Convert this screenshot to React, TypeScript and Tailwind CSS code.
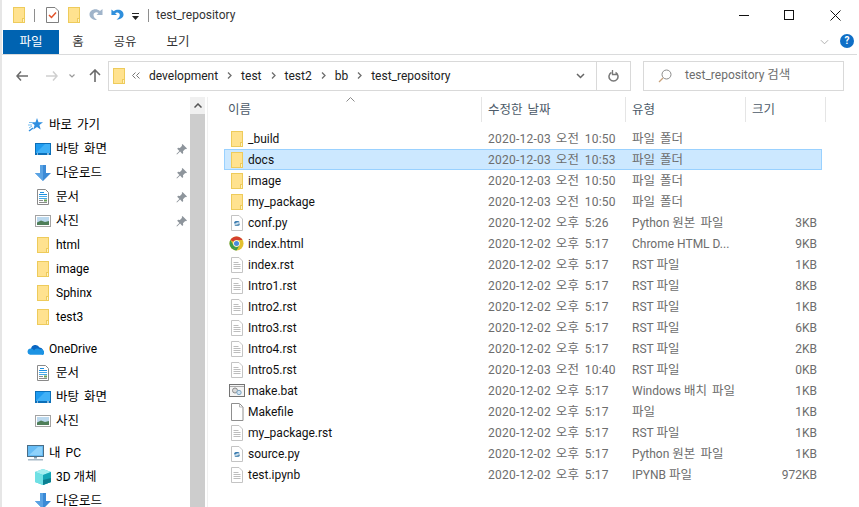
import React from 'react';

const fontStack = 'Roboto, "Noto Sans CJK KR", sans-serif';

// 한글만 살짝 키워서 맑은 고딕 폭에 맞춘다
const T = ({ children }: { children: string }) => (
  <>
    {children.split(/([\uAC00-\uD7A3][\uAC00-\uD7A3 ]*)/).map((part, i) =>
      i % 2 ? (
        <span key={i} className="text-[12.5px] [word-spacing:2px]">
          {part}
        </span>
      ) : (
        part
      ),
    )}
  </>
);

// 탐색기 아이콘들
const FolderIcon = ({ className = '' }: { className?: string }) => (
  <svg width="14" height="16" viewBox="0 0 14 16" className={className}>
    <rect x="1.5" y="0.5" width="11" height="15" fill="#ffe28f" stroke="#eecb5b" />
    <rect x="10.5" y="11.5" width="2" height="4" fill="#fff3c4" stroke="#eecb5b" />
  </svg>
);

const TextFileIcon = () => (
  <svg width="14" height="16" viewBox="0 0 14 16">
    <path d="M1.5.5h7.500l3.500 3.500v11.500h-11z" fill="#fff" stroke="#c4c4c4" />
    <path d="M3.500 5.500h5M3.500 7.500h7M3.500 9.500h7M3.500 11.500h7" stroke="#bdbdbd" />
  </svg>
);

const BlankFileIcon = () => (
  <svg width="14" height="18" viewBox="0 0 14 18">
    <path d="M1.500.5h8l3.500 3.500v13.500h-11.500z" fill="#fff" stroke="#8f8f8f" />
    <path d="M9.500.5v3.500h3.500" fill="none" stroke="#b5b5b5" />
  </svg>
);

const PythonFileIcon = () => (
  <svg width="14" height="16" viewBox="0 0 14 16">
    <path d="M1.500.5h7.500l3.500 3.500v11.500h-11z" fill="#fff" stroke="#c4c4c4" />
    <path d="M4 8.500c0-2 1-2.500 3-2.500s2.500 .5 2.500 1.500H6.500v1z" fill="#3b7cb0" />
    <path d="M10 8.500c0 2-1 2.500-3 2.500s-2.500-.5-2.500-1.500h3v-1z" fill="#5f93b8" />
  </svg>
);

const ChromeIcon = () => (
  <svg width="15" height="15" viewBox="0 0 16 16">
    <circle cx="8" cy="8" r="7.500" fill="#e2c02e" />
    <path d="M8 .5a7.500 7.500 0 0 1 6.500 3.750H8a3.750 3.750 0 0 0-3.250 1.880L1.500 4.250A7.500 7.500 0 0 1 8 .5z" fill="#d5402f" />
    <path d="M1.500 4.250l3.250 5.630A3.750 3.750 0 0 0 8 11.750L4.750 14.500A7.500 7.500 0 0 1 1.500 4.250z" fill="#3c9b4b" />
    <path d="M4.750 14.500 8 11.750a3.750 3.750 0 0 0 3.250-1.880l-3.250 5.630a7.500 7.500 0 0 1-3.250-1z" fill="#3c9b4b" />
    <circle cx="8" cy="8" r="3.500" fill="#fff" />
    <circle cx="8" cy="8" r="2.700" fill="#4a8bdb" />
  </svg>
);

const BatIcon = () => (
  <svg width="16" height="13" viewBox="0 0 16 13">
    <rect x="0.500" y="0.500" width="15" height="12" fill="#f4f4f4" stroke="#737373" />
    <path d="M1 2.500h14" stroke="#a8a8a8" />
    <circle cx="6" cy="6.500" r="2.500" fill="#d9d9d9" stroke="#8c8c8c" />
    <circle cx="10" cy="8.500" r="2.200" fill="#cfe2f1" stroke="#7ea6c4" />
  </svg>
);

const PinIcon = () => (
  <svg width="11" height="11" viewBox="0 0 11 11">
    <path d="M6.500 0 11 4.500l-1 .8-.8-.3-2.200 2.200.2 1.800-.9.900-2.200-2.300L1 10.500l-.6-.5 3-3.100L1.200 4.700l.9-.9 1.800.2L6.100 1.800 5.700 1z" fill="#8e959c" />
  </svg>
);

const StarIcon = () => (
  <svg width="15" height="14" viewBox="0 0 15 14">
    <path d="M9 0l1.500 4.300H15l-3.600 2.800 1.300 4.400L9 8.900l-3.700 2.600 1.300-4.400L3 4.300h4.500z" fill="#2f8fe0" />
    <path d="M1 4.500h4M0 7h4M1 10l3-2" stroke="#74bdf0" />
    <path d="M1 13l4-3" stroke="#2f8fe0" strokeWidth="1.500" />
  </svg>
);

const DesktopIcon = () => (
  <svg width="16" height="12" viewBox="0 0 16 12">
    <rect width="16" height="12" fill="#0c6fb8" />
    <rect x="1" y="1" width="14" height="9" fill="#1e9bf0" />
    <path d="M1 10l9-9h5v9z" fill="#3fb0f7" />
    <path d="M2 11h1M12 11h2" stroke="#fff" />
  </svg>
);

const DownloadIcon = () => (
  <svg width="16" height="16" viewBox="0 0 16 16">
    <path d="M5 0h6v8h5l-8 8-8-8h5z" fill="#3b8ad6" />
    <path d="M5 0h3v16l-8-8h5z" fill="#5aa3e4" />
  </svg>
);

const DocIcon = () => (
  <svg width="12" height="16" viewBox="0 0 12 16">
    <path d="M.5.5h8l3 3v12h-11z" fill="#fff" stroke="#8a8a8a" />
    <path d="M3 3.500h4M2 5.500h8" stroke="#1e90e0" />
    <path d="M2 7.500h8M2 9.500h8" stroke="#46a9e8" />
    <path d="M2 11.500h4M2 13.500h8" stroke="#8b8b8b" />
    <rect x="7" y="10.500" width="3" height="2" fill="#6aa05a" />
  </svg>
);

const PictureIcon = () => (
  <svg width="16" height="12" viewBox="0 0 16 12">
    <rect x="0.500" y="0.500" width="15" height="11" fill="#fff" stroke="#a3a3a3" />
    <rect x="2" y="2" width="12" height="8" fill="#bcd9ee" />
    <path d="M2 7.500l4-2 4 1.500 4-1v4H2z" fill="#4f7f5a" />
  </svg>
);

const OneDriveIcon = () => (
  <svg width="17" height="11" viewBox="0 0 17 11">
    <path d="M4 5a4.500 4.500 0 0 1 8.500-1.500A3.500 3.500 0 0 1 16 6L9 8 4 6z" fill="#0a66c2" />
    <path d="M4 4.500a3.200 3.200 0 0 0-1 6.300h11.500A2.400 2.400 0 0 0 16.500 6.500 2.500 2.500 0 0 0 13 5.500 4 4 0 0 0 7 6.500 3 3 0 0 0 4 4.500z" fill="#1c93e3" />
  </svg>
);

const PcIcon = () => (
  <svg width="17" height="16" viewBox="0 0 17 16">
    <rect x="0.500" y="0.500" width="16" height="11" fill="#66bcf5" stroke="#4b6d85" />
    <path d="M2 10L11 2h4v8z" fill="#8ed2fb" />
    <rect x="7" y="12" width="3" height="1.500" fill="#7f9db1" />
    <rect x="1" y="14" width="15" height="1.500" fill="#a7bac7" />
  </svg>
);

const CubeIcon = () => (
  <svg width="16" height="16" viewBox="0 0 16 16">
    <path d="M8 0l8 3v10l-8 3-8-3V3z" fill="#3fd0d8" />
    <path d="M8 0l8 3-8 3-8-3z" fill="#a5eef0" />
    <path d="M8 6v10l8-3V3z" fill="#14a5b5" />
    <path d="M8 11v5l8-3v-4z" fill="#0c7f91" />
    <path d="M0 3l8 3v10L0 13z" fill="#6fe0e4" />
  </svg>
);

const Chevron = () => (
  <svg width="23" height="9" viewBox="0 0 23 9" className="shrink-0">
    <path d="M10 1.500 13 4.500l-3 3" fill="none" stroke="#6e6e6e" strokeWidth="1.300" />
  </svg>
);

type FileRow = { name: string; date: string; type: string; size?: string; icon: React.ReactNode; selected?: boolean };

const fileRows: FileRow[] = [
  { name: '_build', date: '2020-12-03 오전 10:50', type: '파일 폴더', icon: <FolderIcon /> },
  { name: 'docs', date: '2020-12-03 오전 10:53', type: '파일 폴더', icon: <FolderIcon />, selected: true },
  { name: 'image', date: '2020-12-03 오전 10:50', type: '파일 폴더', icon: <FolderIcon /> },
  { name: 'my_package', date: '2020-12-03 오전 10:50', type: '파일 폴더', icon: <FolderIcon /> },
  { name: 'conf.py', date: '2020-12-02 오후 5:26', type: 'Python 원본 파일', size: '3KB', icon: <PythonFileIcon /> },
  { name: 'index.html', date: '2020-12-02 오후 5:17', type: 'Chrome HTML D...', size: '9KB', icon: <ChromeIcon /> },
  { name: 'index.rst', date: '2020-12-02 오후 5:17', type: 'RST 파일', size: '1KB', icon: <TextFileIcon /> },
  { name: 'Intro1.rst', date: '2020-12-02 오후 5:17', type: 'RST 파일', size: '8KB', icon: <TextFileIcon /> },
  { name: 'Intro2.rst', date: '2020-12-02 오후 5:17', type: 'RST 파일', size: '1KB', icon: <TextFileIcon /> },
  { name: 'Intro3.rst', date: '2020-12-02 오후 5:17', type: 'RST 파일', size: '6KB', icon: <TextFileIcon /> },
  { name: 'Intro4.rst', date: '2020-12-02 오후 5:17', type: 'RST 파일', size: '2KB', icon: <TextFileIcon /> },
  { name: 'Intro5.rst', date: '2020-12-03 오전 10:40', type: 'RST 파일', size: '0KB', icon: <TextFileIcon /> },
  { name: 'make.bat', date: '2020-12-02 오후 5:17', type: 'Windows 배치 파일', size: '1KB', icon: <BatIcon /> },
  { name: 'Makefile', date: '2020-12-02 오후 5:17', type: '파일', size: '1KB', icon: <BlankFileIcon /> },
  { name: 'my_package.rst', date: '2020-12-02 오후 5:17', type: 'RST 파일', size: '1KB', icon: <TextFileIcon /> },
  { name: 'source.py', date: '2020-12-02 오후 5:17', type: 'Python 원본 파일', size: '1KB', icon: <PythonFileIcon /> },
  { name: 'test.ipynb', date: '2020-12-02 오후 5:17', type: 'IPYNB 파일', size: '972KB', icon: <TextFileIcon /> },
];

const NavItem = ({ icon, label, pinned, top }: { icon: React.ReactNode; label: string; pinned?: boolean; top?: boolean }) => (
  <div className={`flex h-6 items-center text-[12px] text-black ${top ? 'pl-[25px]' : 'pl-[33px]'}`}>
    <span className={`flex h-4 shrink-0 items-center justify-center ${top ? 'w-[17px]' : 'w-4'}`}>{icon}</span>
    <span className="flex-1 pl-[5px]">
      <T>{label}</T>
    </span>
    {pinned && (
      <span className="flex w-[14px] shrink-0 items-center">
        <PinIcon />
      </span>
    )}
  </div>
);

export default function App() {
  return (
    <div
      className="flex h-[507px] w-[859px] flex-col overflow-hidden border-l-2 border-[#e6e6e6] bg-white"
      style={{ fontFamily: fontStack }}
    >
      {/* 제목 표시줄 */}
      <div className="flex h-[30px] shrink-0 items-center">
        <FolderIcon className="ml-[10px]" />
        <span className="ml-[8px] h-[13px] w-px bg-[#8e8e8e]" />
        <svg width="13" height="16" viewBox="0 0 13 16" className="ml-[11px]">
          <path d="M.5.5h8.500l3.500 3.500v11.500h-12z" fill="#fff" stroke="#7f7f7f" />
          <path d="M3 8l2.500 2.500L10 5.500" fill="none" stroke="#e2532a" strokeWidth="1.500" />
        </svg>
        <FolderIcon className="ml-[8px]" />
        <svg width="15" height="14" viewBox="0 0 15 14" className="ml-[8px]">
          <path d="M13.500 1v6h-6l2-2c-2-1.500-5-.5-5 2 0 2 1.500 3.500 3.500 5-4 0-7.500-2-7.500-5.500C.5 2 6.500-.5 11 3z" fill="#a0b4ca" />
        </svg>
        <svg width="14" height="14" viewBox="0 0 15 14" className="ml-[6px]">
          <path d="M1.500 1v6h6l-2-2c2-1.500 5-.5 5 2 0 2-1.500 3.500-3.500 5 4 0 7.500-2 7.500-5.500C14.500 2 8.500-.5 4 3z" fill="#2f8fdc" />
        </svg>
        <svg width="7" height="7" viewBox="0 0 7 7" className="ml-[8px] mt-[3px]">
          <path d="M0 0h7v1H0zM0 3h7L3.500 7z" fill="#222" />
        </svg>
        <span className="ml-[9px] h-[13px] w-px bg-[#8e8e8e]" />
        <span className="ml-[7px] text-[12px] text-[#333]">test_repository</span>
        <svg width="10" height="1" viewBox="0 0 10 1" className="ml-auto">
          <rect width="10" height="1" fill="#111" />
        </svg>
        <svg width="10" height="10" viewBox="0 0 10 10" className="ml-[35px]">
          <rect x="0.500" y="0.500" width="9" height="9" fill="none" stroke="#111" />
        </svg>
        <svg width="11" height="11" viewBox="0 0 11 11" className="ml-[36px] mr-[18px]">
          <path d="M.5.5l10 10M10.500.5l-10 10" stroke="#111" />
        </svg>
      </div>

      {/* 리본 탭 */}
      <div className="mr-[2px] flex h-[25px] shrink-0 items-start border-b border-[#dadbdc] pl-px text-[12px] text-[#333]">
        <span className="flex h-[24px] w-14 items-center justify-center bg-[#0063b1] text-white">
          <T>파일</T>
        </span>
        <span className="flex h-[24px] w-[38px] items-center justify-center">
          <T>홈</T>
        </span>
        <span className="flex h-[24px] w-[56px] items-center justify-center">
          <T>공유</T>
        </span>
        <span className="flex h-[24px] w-[50px] items-center justify-center">
          <T>보기</T>
        </span>
        <svg width="9" height="6" viewBox="0 0 10 6" className="ml-auto mt-[9px]">
          <path d="M1 1l4 4 4-4" fill="none" stroke="#a8a8a8" />
        </svg>
        <span className="ml-[11px] mr-[3px] mt-[4px] flex h-[14px] w-[14px] items-center justify-center rounded-full bg-[#0f6fc6] text-[10px] font-bold leading-none text-white">
          ?
        </span>
      </div>

      {/* 주소 표시줄 */}
      <div className="flex h-[42px] shrink-0 items-center pb-px">
        <svg width="12" height="10" viewBox="0 0 12 10" className="ml-[14px]">
          <path d="M5 .5L1 5l4 4.500M1 5h11" fill="none" stroke="#6b6b6b" strokeWidth="1.500" />
        </svg>
        <svg width="12" height="10" viewBox="0 0 12 10" className="ml-[18px]">
          <path d="M7 .5L11 5l-4 4.500M11 5H0" fill="none" stroke="#cfcfcf" strokeWidth="1.500" />
        </svg>
        <svg width="6" height="4" viewBox="0 0 6 4" className="ml-[11px]">
          <path d="M.5.5L3 3 5.500.5" fill="none" stroke="#9a9a9a" strokeWidth="1.200" />
        </svg>
        <svg width="12" height="13" viewBox="0 0 12 13" className="ml-[14px]">
          <path d="M6 1v12M1 6l5-5 5 5" fill="none" stroke="#6b6b6b" strokeWidth="1.600" />
        </svg>
        <div className="ml-[7px] flex h-[30px] w-[523px] items-center border border-[#d9d9d9] text-[12px] text-[#222]">
          <FolderIcon className="ml-[3px]" />
          <svg width="8" height="7" viewBox="0 0 8 7" className="ml-[6px]">
            <path d="M3.500.5L.5 3.500l3 3M7.500.5l-3 3 3 3" fill="none" stroke="#777" />
          </svg>
          <span className="ml-[9px]">development</span>
          <Chevron />
          <span>test</span>
          <Chevron />
          <span>test2</span>
          <Chevron />
          <span>bb</span>
          <Chevron />
          <span>test_repository</span>
          <svg width="9" height="6" viewBox="0 0 9 6" className="ml-auto">
            <path d="M1 1l3.500 3.500L8 1" fill="none" stroke="#666" strokeWidth="1.500" />
          </svg>
          <span className="ml-[11px] flex h-full w-[34px] items-center justify-center border-l border-[#d9d9d9]">
            <svg width="11" height="12" viewBox="0 0 11 12">
              <path d="M7.500 2.500a4.500 4.500 0 1 1-4 0" fill="none" stroke="#777" strokeWidth="1.500" />
              <path d="M4.500 0v4.500H9" fill="none" stroke="#777" strokeWidth="1.300" />
            </svg>
          </span>
        </div>
        <div className="ml-3 flex h-[30px] w-[201px] items-center border border-[#d9d9d9] text-[12px] text-[#6d6d6d]">
          <svg width="14" height="14" viewBox="0 0 14 14" className="ml-[14px]">
            <circle cx="8.500" cy="5.500" r="4.500" fill="none" stroke="#8a8a8a" />
            <path d="M5 9l-4 4" stroke="#c9a27c" strokeWidth="1.300" />
          </svg>
          <span className="ml-[13px]">
            <T>test_repository 검색</T>
          </span>
        </div>
      </div>

      <div className="flex min-h-0 flex-1">
        {/* 탐색 창 */}
        <div className="flex w-[206px] shrink-0 border-r border-[#f0f0f0]">
          <div className="min-w-0 flex-1 pt-4">
            <NavItem top icon={<StarIcon />} label="바로 가기" />
            <NavItem icon={<DesktopIcon />} label="바탕 화면" pinned />
            <NavItem icon={<DownloadIcon />} label="다운로드" pinned />
            <NavItem icon={<DocIcon />} label="문서" pinned />
            <NavItem icon={<PictureIcon />} label="사진" pinned />
            <NavItem icon={<FolderIcon />} label="html" />
            <NavItem icon={<FolderIcon />} label="image" />
            <NavItem icon={<FolderIcon />} label="Sphinx" />
            <NavItem icon={<FolderIcon />} label="test3" />
            <div className="h-2" />
            <NavItem top icon={<OneDriveIcon />} label="OneDrive" />
            <NavItem icon={<DocIcon />} label="문서" />
            <NavItem icon={<DesktopIcon />} label="바탕 화면" />
            <NavItem icon={<PictureIcon />} label="사진" />
            <div className="h-2" />
            <NavItem top icon={<PcIcon />} label="내 PC" />
            <NavItem icon={<CubeIcon />} label="3D 개체" />
            <NavItem icon={<DownloadIcon />} label="다운로드" />
          </div>
          <div className="mr-[2px] flex w-[15px] shrink-0 flex-col">
            <div className="flex h-[17px] items-center justify-center bg-[#f0f0f0]">
              <svg width="8" height="5" viewBox="0 0 8 5">
                <path d="M.5 4.500L4 1l3.500 3.500" fill="none" stroke="#555" strokeWidth="1.500" />
              </svg>
            </div>
            <div className="flex-1 bg-[#cdcdcd]" />
          </div>
        </div>

        {/* 파일 목록 */}
        <div className="min-w-0 flex-1 pl-4">
          <div className="relative flex h-[25px] text-[12px] text-[#4c5a68]">
            <svg width="9" height="5" viewBox="0 0 9 5" className="absolute left-[122px] top-0">
              <path d="M.5 4.500L4.500.5l4 4" fill="none" stroke="#8a8a8a" />
            </svg>
            <span className="flex w-[258px] items-center border-r border-[#e5e5e5] pl-[4px] pt-px">
              <span>
                <T>이름</T>
              </span>
            </span>
            <span className="flex w-[144px] items-center border-r border-[#e5e5e5] pl-[6px] pt-px">
              <span>
                <T>수정한 날짜</T>
              </span>
            </span>
            <span className="flex w-[120px] items-center border-r border-[#e5e5e5] pl-[6px] pt-px">
              <span>
                <T>유형</T>
              </span>
            </span>
            <span className="flex w-[80px] items-center border-r border-[#e5e5e5] pl-[6px] pt-px">
              <span>
                <T>크기</T>
              </span>
            </span>
          </div>
          <div className="mt-[6px] w-[598px]">
            {fileRows.map((row) => (
              <div
                key={row.name}
                className={`flex h-[21px] items-center border text-[12px] ${row.selected ? 'border-[#99d1ff] bg-[#cce8ff]' : 'border-transparent'}`}
              >
                <span className="flex w-[263px] shrink-0 items-center">
                  <span className="flex w-[23px] shrink-0 items-center justify-center">{row.icon}</span>
                  <span className="text-[#111]">{row.name}</span>
                </span>
                <span className="w-[144px] shrink-0 whitespace-nowrap pt-px tracking-[0.25px] text-[#6d6d6d] [word-spacing:1.5px]">
                  <T>{row.date}</T>
                </span>
                <span className="w-[120px] shrink-0 whitespace-nowrap pt-px text-[#6d6d6d]">
                  <T>{row.type}</T>
                </span>
                <span className="w-[65px] shrink-0 text-right text-[#6d6d6d]">{row.size}</span>
              </div>
            ))}
          </div>
        </div>
      </div>
    </div>
  );
}
